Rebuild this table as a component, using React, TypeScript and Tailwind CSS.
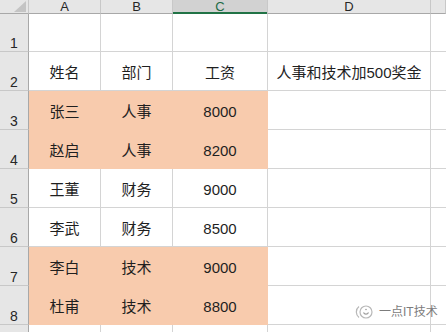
const cols = ["A", "B", "C", "D", ""];

type Row = { n: number; cells: string[]; fill?: boolean };

const rows: Row[] = [
  { n: 1, cells: ["", "", "", ""] },
  { n: 2, cells: ["姓名", "部门", "工资", "人事和技术加500奖金"] },
  { n: 3, cells: ["张三", "人事", "8000", ""], fill: true },
  { n: 4, cells: ["赵启", "人事", "8200", ""], fill: true },
  { n: 5, cells: ["王董", "财务", "9000", ""] },
  { n: 6, cells: ["李武", "财务", "8500", ""] },
  { n: 7, cells: ["李白", "技术", "9000", ""], fill: true },
  { n: 8, cells: ["杜甫", "技术", "8800", ""], fill: true },
];

const font = { fontFamily: '"Liberation Sans", "Noto Sans CJK SC", sans-serif' };

function RowHead({ n, h }: { n: number | string; h: string }) {
  return (
    <div
      className={`${h} flex items-end justify-center border-r border-b border-r-[#a8a8a8] border-b-[#c8c8c8] bg-[#e6e6e6] pb-[1px] text-[14px] leading-none text-[#262626]`}
    >
      {n}
    </div>
  );
}

export default function App() {
  return (
    <div
      className="relative h-[332px] w-[446px] overflow-hidden bg-white"
      style={font}
    >
      <div className="grid grid-cols-[29px_72px_72px_95px_163px_1fr]">
        {/* header row */}
        <div className="relative h-[14px] border-r border-b border-r-[#c8c8c8] border-b-[#a8a8a8] bg-[#e6e6e6]">
          <svg className="absolute top-[1px] left-[14px]" width="12" height="11" viewBox="0 0 12 11">
            <polygon points="12,0 12,11 0,11" fill="#c4c4c4" />
          </svg>
        </div>
        {cols.map((c) => {
          const sel = c === "C";
          return (
            <div
              key={c || "E"}
              className={`relative flex h-[14px] items-center justify-center border-r border-b border-r-[#c8c8c8] border-b-[#a8a8a8] text-[13px] leading-[13px] ${
                sel ? "bg-[#d2d2d2] text-[#1d6b45]" : "bg-[#e6e6e6] text-[#262626]"
              }`}
            >
              {c}
              {sel && <span className="absolute right-0 -bottom-px left-0 h-[2px] bg-[#217346]" />}
            </div>
          );
        })}

        {rows.map((r) => {
          const h = r.n === 1 ? "h-[38px]" : "h-[39px]";
          return [
            <RowHead key={`h${r.n}`} n={r.n} h={h} />,
            ...r.cells.map((t, i) => {
              const filled = r.fill && i < 3;
              return (
                <div
                  key={`${r.n}-${i}`}
                  className={`${h} flex items-center justify-center border-r border-b pt-[3px] text-[15px] leading-none text-[#1f1f1f] ${
                    filled
                      ? "border-[#f8cbad] bg-[#f8cbad]"
                      : "border-[#d4d4d4] bg-white"
                  }`}
                >
                  {t}
                </div>
              );
            }),
            <div key={`e${r.n}`} className={`${h} border-b border-[#d4d4d4]`} />,
          ];
        })}

        {/* partial row 9 */}
        <RowHead n="" h="h-[10px]" />
        <div className="h-[10px] border-r border-[#d4d4d4]" />
        <div className="h-[10px] border-r border-[#d4d4d4]" />
        <div className="h-[10px] border-r border-[#d4d4d4]" />
        <div className="h-[10px] border-r border-[#d4d4d4]" />
        <div className="h-[10px]" />
      </div>

      {/* watermark */}
      <div className="absolute top-[303px] left-[354px] flex items-center gap-[5px] text-[12px] leading-none text-[#7c7c7c]">
        <svg width="20" height="18" viewBox="0 0 20 18" fill="none" stroke="#b8b8b8" strokeWidth="1.2">
          <path d="M5 3.5 A7 7 0 0 0 5 14.5" />
          <circle cx="12" cy="9" r="6" />
          <path d="M9.5 9.5 A2.8 2.8 0 0 0 14.5 9.5" stroke="#9a9a9a" />
          <circle cx="12" cy="6.5" r="0.8" fill="#9a9a9a" stroke="none" />
        </svg>
        <span>一点IT技术</span>
      </div>
    </div>
  );
}
